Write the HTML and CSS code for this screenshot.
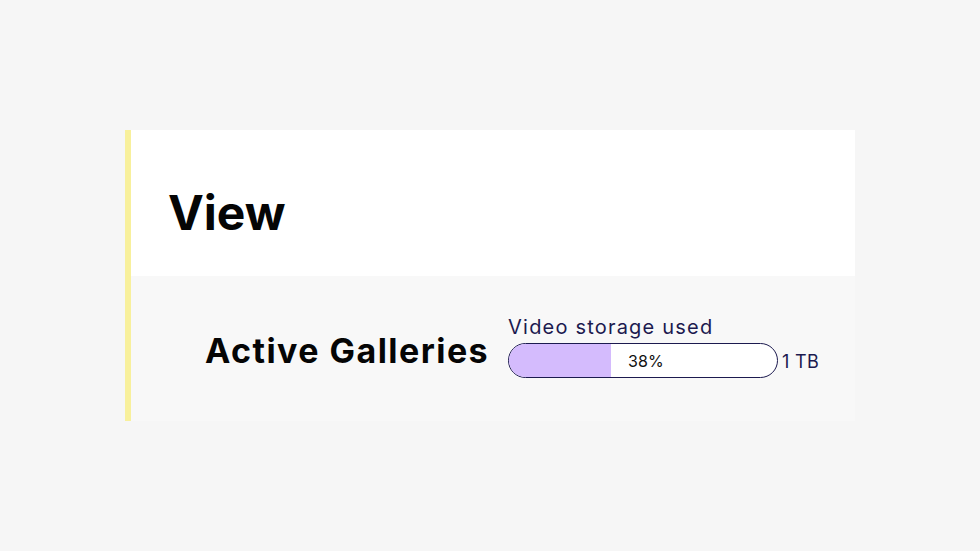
FILE: index.html
```html
<!DOCTYPE html>
<html>
<head>
<meta charset="utf-8">
<link rel="stylesheet" href="styles.css">
</head>
<body>
<div class="page">
  <section class="card">
    <header class="card-head">
      <h1 class="title">View</h1>
    </header>
    <div class="card-body">
      <h2 class="subtitle">Active Galleries</h2>
      <div class="storage">
        <div class="storage-label">Video storage used</div>
        <div class="storage-row">
          <div class="bar">
            <div class="bar-fill" style="width:38%"></div>
            <span class="bar-text">38%</span>
          </div>
          <span class="cap">1 TB</span>
        </div>
      </div>
    </div>
  </section>
</div>
</body>
</html>
```
FILE: styles.css
```css
html, body {
  margin: 0;
  padding: 0;
  background: #f6f6f6;
}
body {
  font-family: Inter, "DejaVu Sans", sans-serif;
  width: 980px;
  height: 551px;
  overflow: hidden;
}
.page {
  padding: 130px 0 0 125px;
}
.card {
  width: 724px;
  border-left: 6px solid #f8f09c;
}
.card-head {
  background: #ffffff;
  height: 146px;
  display: flex;
  align-items: flex-end;
  padding-left: 37px;
  box-sizing: border-box;
  padding-bottom: 39px;
}
.title {
  margin: 0;
  font-size: 48px;
  font-weight: 700;
  color: #050505;
  letter-spacing: 0px;
  line-height: 1;
}
.card-body {
  background: #f8f8f8;
  height: 145px;
  box-sizing: border-box;
  display: flex;
  align-items: flex-start;
  padding: 41px 0 0 74px;
  gap: 19px;
}
.subtitle {
  margin: 17px 0 0 0;
  font-size: 34px;
  font-weight: 700;
  color: #050505;
  line-height: 1;
  letter-spacing: 1.45px;
}
.storage {
  display: flex;
  flex-direction: column;
}
.storage-label {
  font-size: 20px;
  color: #1c1a4f;
  line-height: 24px;
  letter-spacing: 1.2px;
  margin-top: -2px;
  margin-bottom: 4px;
}
.storage-row {
  display: flex;
  align-items: center;
}
.bar {
  position: relative;
  width: 270px;
  height: 35px;
  box-sizing: border-box;
  border: 1.8px solid #1c1a4f;
  border-radius: 18px;
  background: #ffffff;
  overflow: hidden;
  display: flex;
  align-items: center;
}
.bar-fill {
  position: absolute;
  left: 0;
  top: 0;
  bottom: 0;
  background: #d4bbfd;
}
.bar-text {
  position: relative;
  margin-left: 119px;
  font-size: 16px;
  color: #111111;
}
.cap {
  margin-left: 4px;
  font-size: 18px;
  letter-spacing: 0.3px;
  color: #1c1a4f;
  padding-top: 2px;
}
```
